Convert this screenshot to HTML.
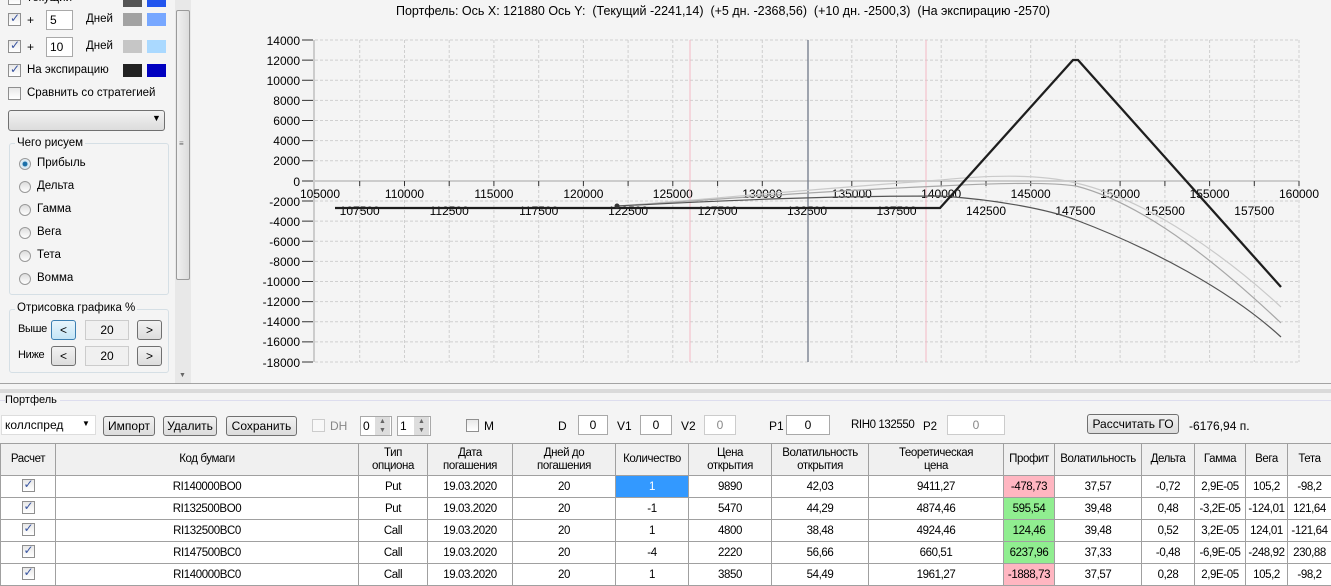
<!DOCTYPE html>
<html><head><meta charset="utf-8"><style>
*{box-sizing:border-box;margin:0;padding:0}
body{width:1331px;height:579px;overflow:hidden;background:#f4f4f4;font-family:"Liberation Sans","DejaVu Sans",sans-serif;font-size:12px;color:#000;position:relative}
.a{position:absolute;white-space:nowrap}
.cb{position:absolute;width:13px;height:13px;border:1px solid #8f8f8f;background:linear-gradient(#e8e8e8,#fff)}
.cb.on::after{content:"✓";position:absolute;left:1px;top:-3px;font-size:12px;color:#3a55a0;font-weight:bold}
.sw{position:absolute;width:19px;height:13px}
.tb{position:absolute;height:20px;border:1px solid #a9a9a9;background:#fff;text-align:center;line-height:18px}
.btn{position:absolute;border:1px solid #707070;border-radius:3px;background:linear-gradient(#f2f2f2,#dcdcdc);text-align:center;line-height:18px;height:20px}
.rd{position:absolute;width:12px;height:12px;border:1px solid #9a9a9a;border-radius:50%;background:linear-gradient(#ddd,#fff)}
.gb{position:absolute;border:1px solid #d5dfe5;border-radius:3px}
table{position:absolute;left:0;top:443px;border-collapse:collapse;font-size:11.5px;letter-spacing:-0.4px;table-layout:fixed}
td{border:1px solid #a0a0a0;text-align:center;height:22px;padding:0;background:#fff;overflow:hidden;white-space:nowrap}
tr.h td{background:#f0f0f0;height:32px;line-height:13px}
.pk{background:#ffb6c1!important}.gr{background:#90ee90!important}.sel{background:#3399ff!important;color:#fff}
.sm{font-size:11.5px}
</style></head><body>
<!-- left panel -->
<div class="cb on" style="left:8px;top:-8px"></div><div class="a sm" style="left:26px;top:-8px">Текущий</div>
<div class="sw" style="left:123px;top:-6px;background:#555"></div><div class="sw" style="left:147px;top:-6px;background:#2255ee"></div>
<div class="cb on" style="left:8px;top:13px"></div><div class="a" style="left:27px;top:13px">+</div>
<div class="tb" style="left:46px;top:10px;width:27px;text-align:left;padding-left:3px">5</div><div class="a sm" style="left:86px;top:13px">Дней</div>
<div class="sw" style="left:123px;top:13px;background:#a2a2a2"></div><div class="sw" style="left:147px;top:13px;background:#77a7ff"></div>
<div class="cb on" style="left:8px;top:40px"></div><div class="a" style="left:27px;top:40px">+</div>
<div class="tb" style="left:46px;top:37px;width:27px;text-align:left;padding-left:3px">10</div><div class="a sm" style="left:86px;top:40px">Дней</div>
<div class="sw" style="left:123px;top:40px;background:#c6c6c6"></div><div class="sw" style="left:147px;top:40px;background:#aad9ff"></div>
<div class="cb on" style="left:8px;top:64px"></div><div class="a sm" style="left:27px;top:64px">На экспирацию</div>
<div class="sw" style="left:123px;top:64px;background:#222"></div><div class="sw" style="left:147px;top:64px;background:#0000c0"></div>
<div class="cb" style="left:8px;top:87px"></div><div class="a sm" style="left:27px;top:87px">Сравнить со стратегией</div>
<div class="btn" style="left:8px;top:110px;width:157px;height:21px;border-radius:3px"></div><div class="a" style="left:152px;top:113px;font-size:9px">▼</div>
<div class="gb" style="left:9px;top:143px;width:160px;height:152px"></div><div class="a sm" style="left:15px;top:137px;background:#f4f4f4;padding:0 2px">Чего рисуем</div>
<div class="rd" style="left:19px;top:158px;background:radial-gradient(#1a6fa8 30%,#cfe4f0 40%,#fff)"></div><div class="a sm" style="left:37px;top:157px">Прибыль</div>
<div class="rd" style="left:19px;top:181px"></div><div class="a sm" style="left:37px;top:180px">Дельта</div>
<div class="rd" style="left:19px;top:204px"></div><div class="a sm" style="left:37px;top:203px">Гамма</div>
<div class="rd" style="left:19px;top:227px"></div><div class="a sm" style="left:37px;top:226px">Вега</div>
<div class="rd" style="left:19px;top:250px"></div><div class="a sm" style="left:37px;top:249px">Тета</div>
<div class="rd" style="left:19px;top:273px"></div><div class="a sm" style="left:37px;top:272px">Вомма</div>
<div class="gb" style="left:9px;top:309px;width:160px;height:64px"></div><div class="a sm" style="left:15px;top:302px;background:#f4f4f4;padding:0 2px">Отрисовка графика %</div>
<div class="a" style="left:18px;top:323px;font-size:11px;letter-spacing:-0.3px">Выше</div>
<div class="btn" style="left:51px;top:320px;width:25px;border-color:#3c7fb1;background:linear-gradient(#e8f5fc,#c4e5f6)">&lt;</div>
<div class="tb" style="left:85px;top:320px;width:44px;background:#f0f0f0;border-color:#ccc">20</div>
<div class="btn" style="left:137px;top:320px;width:25px">&gt;</div>
<div class="a" style="left:18px;top:349px;font-size:11px;letter-spacing:-0.3px">Ниже</div>
<div class="btn" style="left:51px;top:346px;width:25px">&lt;</div>
<div class="tb" style="left:85px;top:346px;width:44px;background:#f0f0f0;border-color:#ccc">20</div>
<div class="btn" style="left:137px;top:346px;width:25px">&gt;</div>
<div class="a" style="left:175px;top:0;width:16px;height:384px;background:#e8e8e8"></div>
<div class="a" style="left:176px;top:10px;width:14px;height:270px;border:1px solid #9a9a9a;border-radius:2px;background:linear-gradient(90deg,#f0f0f0,#dcdcdc)"></div>
<div class="a" style="left:179px;top:139px;font-size:8px;color:#666">≡</div>
<div class="a" style="left:179px;top:372px;font-size:7px;color:#666">▼</div>
<!-- chart -->
<div class="a" style="left:396px;top:4px;font-size:12.5px">Портфель: Ось X: 121880 Ось Y:&nbsp; (Текущий -2241,14)&nbsp; (+5 дн. -2368,56)&nbsp; (+10 дн. -2500,3)&nbsp; (На экспирацию -2570)</div>
<svg class="a" style="left:0;top:0" width="1331" height="384" font-family="Liberation Sans,sans-serif" font-size="12">
<g stroke="#cfcfcf" stroke-dasharray="3,2" stroke-width="1">
<path d="M359.7 40V362M404.5 40V362M449.2 40V362M493.9 40V362M538.7 40V362M583.4 40V362M628.1 40V362M672.8 40V362M717.6 40V362M762.3 40V362M851.8 40V362M896.5 40V362M941.2 40V362M986 40V362M1030.7 40V362M1075.4 40V362M1120.1 40V362M1164.9 40V362M1209.6 40V362M1254.3 40V362M1299 40V362"/>
<path d="M315 40H1299M315 60.1H1299M315 80.3H1299M315 100.4H1299M315 120.5H1299M315 140.6H1299M315 160.8H1299M315 201H1299M315 221.1H1299M315 241.3H1299M315 261.4H1299M315 281.5H1299M315 301.6H1299M315 321.8H1299M315 341.9H1299M315 362H1299"/>
</g>
<path d="M314 40V362" stroke="#ccc" stroke-width="2"/>
<path d="M313 181H1299" stroke="#ccc" stroke-width="2"/>
<g stroke="#333"><path d="M302 40H313M302 60.1H313M302 80.3H313M302 100.4H313M302 120.5H313M302 140.6H313M302 160.8H313M302 181H313M302 201H313M302 221.1H313M302 241.3H313M302 261.4H313M302 281.5H313M302 301.6H313M302 321.8H313M302 341.9H313M302 362H313"/>
<path d="M359.7 181v5M404.5 181v5M449.2 181v5M493.9 181v5M538.7 181v5M583.4 181v5M628.1 181v5M672.8 181v5M717.6 181v5M762.3 181v5M851.8 181v5M896.5 181v5M941.2 181v5M986 181v5M1030.7 181v5M1075.4 181v5M1120.1 181v5M1164.9 181v5M1209.6 181v5M1254.3 181v5M1299 181v5"/></g>
<g text-anchor="end"><text x="300" y="45">14000</text><text x="300" y="65">12000</text><text x="300" y="85">10000</text><text x="300" y="105">8000</text><text x="300" y="125">6000</text><text x="300" y="145">4000</text><text x="300" y="165">2000</text><text x="300" y="186">0</text><text x="300" y="206">-2000</text><text x="300" y="226">-4000</text><text x="300" y="246">-6000</text><text x="300" y="266">-8000</text><text x="300" y="286">-10000</text><text x="300" y="306">-12000</text><text x="300" y="326">-14000</text><text x="300" y="346">-16000</text><text x="300" y="367">-18000</text></g>
<g text-anchor="middle"><text x="320" y="198">105000</text><text x="404.5" y="198">110000</text><text x="493.9" y="198">115000</text><text x="583.4" y="198">120000</text><text x="672.8" y="198">125000</text><text x="762.3" y="198">130000</text><text x="851.8" y="198">135000</text><text x="941.2" y="198">140000</text><text x="1030.7" y="198">145000</text><text x="1120.1" y="198">150000</text><text x="1209.6" y="198">155000</text><text x="1299" y="198">160000</text>
<text x="359.7" y="215">107500</text><text x="449.2" y="215">112500</text><text x="538.7" y="215">117500</text><text x="628.1" y="215">122500</text><text x="717.6" y="215">127500</text><text x="807" y="215">132500</text><text x="896.5" y="215">137500</text><text x="986" y="215">142500</text><text x="1075.4" y="215">147500</text><text x="1164.9" y="215">152500</text><text x="1254.3" y="215">157500</text></g>
<path d="M690 40V362M926 40V362" stroke="#f4b8c4" stroke-width="1"/>
<path d="M808 40V362" stroke="#707888" stroke-width="1.3"/>
<g fill="none">
<path d="M617 206 C700 200 800 190 941 180 C990 175 1040 174 1076 183 C1150 200 1230 260 1281 307" stroke="#cacaca" stroke-width="1.2"/>
<path d="M617 206 C700 201 800 192 941 186 C1000 183 1050 182 1076 186 C1150 205 1230 275 1281 323" stroke="#a8a8a8" stroke-width="1.2"/>
<path d="M617 206 C700 202 800 196 941 196 C1000 200 1050 210 1076 220 C1150 248 1230 290 1281 337" stroke="#555" stroke-width="1.2"/>
<path d="M335 208H940L1073 60h5L1281 287" stroke="#1e1e1e" stroke-width="2.3"/>
</g>
<circle cx="617" cy="206" r="2.5" fill="#333"/>
<path d="M0 384H1331" stroke="#888" stroke-width="1.5"/>
</svg>
<div class="a" style="left:0;top:389px;width:1331px;height:4px;background:#dadada"></div>
<!-- portfolio -->
<div class="a" style="left:0;top:400px;width:1331px;border-top:1px solid #dde"></div>
<div class="a" style="left:5px;top:394px;background:#f4f4f4;padding-right:3px;font-size:11px">Портфель</div>
<div class="tb" style="left:1px;top:415px;width:95px;text-align:left;padding-left:3px;border-color:#ddd">коллспред</div><div class="a" style="left:82px;top:419px;font-size:8px">▼</div>
<div class="btn" style="left:103px;top:416px;width:52px">Импорт</div>
<div class="btn" style="left:163px;top:416px;width:54px">Удалить</div>
<div class="btn" style="left:226px;top:416px;width:71px">Сохранить</div>
<div class="cb" style="left:312px;top:419px;border-color:#ccc;background:#f8f8f8"></div><div class="a" style="left:330px;top:419px;color:#888">DH</div>
<div class="tb" style="left:360px;top:416px;width:32px;text-align:left;padding-left:2px">0</div><div class="a" style="left:375px;top:417px;width:15px;height:18px;background:#ddd;font-size:7px;text-align:center;line-height:9px;color:#666">▲<br>▼</div>
<div class="tb" style="left:397px;top:416px;width:34px;text-align:left;padding-left:2px">1</div><div class="a" style="left:414px;top:417px;width:15px;height:18px;background:#ddd;font-size:7px;text-align:center;line-height:9px;color:#666">▲<br>▼</div>
<div class="cb" style="left:466px;top:419px"></div><div class="a" style="left:484px;top:419px">M</div>
<div class="a" style="left:558px;top:419px">D</div><div class="tb" style="left:578px;top:415px;width:30px">0</div>
<div class="a" style="left:617px;top:419px">V1</div><div class="tb" style="left:640px;top:415px;width:32px">0</div>
<div class="a" style="left:681px;top:419px">V2</div><div class="tb" style="left:704px;top:415px;width:32px;color:#888;border-color:#ccc">0</div>
<div class="a" style="left:769px;top:419px">P1</div><div class="tb" style="left:786px;top:415px;width:44px">0</div>
<div class="a" style="left:851px;top:419px;font-size:11.5px;letter-spacing:-0.4px">RIH0 132550</div><div class="a" style="left:923px;top:421px;font-size:11.5px">P2</div>
<div class="tb" style="left:947px;top:415px;width:58px;color:#888;border-color:#ccc">0</div>
<div class="btn" style="left:1087px;top:414px;width:92px">Рассчитать ГО</div>
<div class="a" style="left:1189px;top:419px">-6176,94 п.</div>
<table style="width:1331px">
<colgroup><col style="width:55px"><col style="width:303px"><col style="width:69px"><col style="width:85px"><col style="width:103px"><col style="width:73px"><col style="width:83px"><col style="width:97px"><col style="width:135px"><col style="width:51px"><col style="width:87px"><col style="width:53px"><col style="width:51px"><col style="width:42px"><col style="width:44px"></colgroup>
<tr class="h"><td>Расчет</td><td>Код бумаги</td><td>Тип<br>опциона</td><td>Дата<br>погашения</td><td>Дней до<br>погашения</td><td>Количество</td><td>Цена<br>открытия</td><td>Волатильность<br>открытия</td><td>Теоретическая<br>цена</td><td>Профит</td><td>Волатильность</td><td>Дельта</td><td>Гамма</td><td>Вега</td><td>Тета</td></tr>
<tr><td><span class="cb on" style="position:relative;display:inline-block"></span></td><td>RI140000BO0</td><td>Put</td><td>19.03.2020</td><td>20</td><td class="sel">1</td><td>9890</td><td>42,03</td><td>9411,27</td><td class="pk">-478,73</td><td>37,57</td><td>-0,72</td><td>2,9E-05</td><td>105,2</td><td>-98,2</td></tr>
<tr><td><span class="cb on" style="position:relative;display:inline-block"></span></td><td>RI132500BO0</td><td>Put</td><td>19.03.2020</td><td>20</td><td>-1</td><td>5470</td><td>44,29</td><td>4874,46</td><td class="gr">595,54</td><td>39,48</td><td>0,48</td><td>-3,2E-05</td><td>-124,01</td><td>121,64</td></tr>
<tr><td><span class="cb on" style="position:relative;display:inline-block"></span></td><td>RI132500BC0</td><td>Call</td><td>19.03.2020</td><td>20</td><td>1</td><td>4800</td><td>38,48</td><td>4924,46</td><td class="gr">124,46</td><td>39,48</td><td>0,52</td><td>3,2E-05</td><td>124,01</td><td>-121,64</td></tr>
<tr><td><span class="cb on" style="position:relative;display:inline-block"></span></td><td>RI147500BC0</td><td>Call</td><td>19.03.2020</td><td>20</td><td>-4</td><td>2220</td><td>56,66</td><td>660,51</td><td class="gr">6237,96</td><td>37,33</td><td>-0,48</td><td>-6,9E-05</td><td>-248,92</td><td>230,88</td></tr>
<tr><td><span class="cb on" style="position:relative;display:inline-block"></span></td><td>RI140000BC0</td><td>Call</td><td>19.03.2020</td><td>20</td><td>1</td><td>3850</td><td>54,49</td><td>1961,27</td><td class="pk">-1888,73</td><td>37,57</td><td>0,28</td><td>2,9E-05</td><td>105,2</td><td>-98,2</td></tr>
</table>
</body></html>
